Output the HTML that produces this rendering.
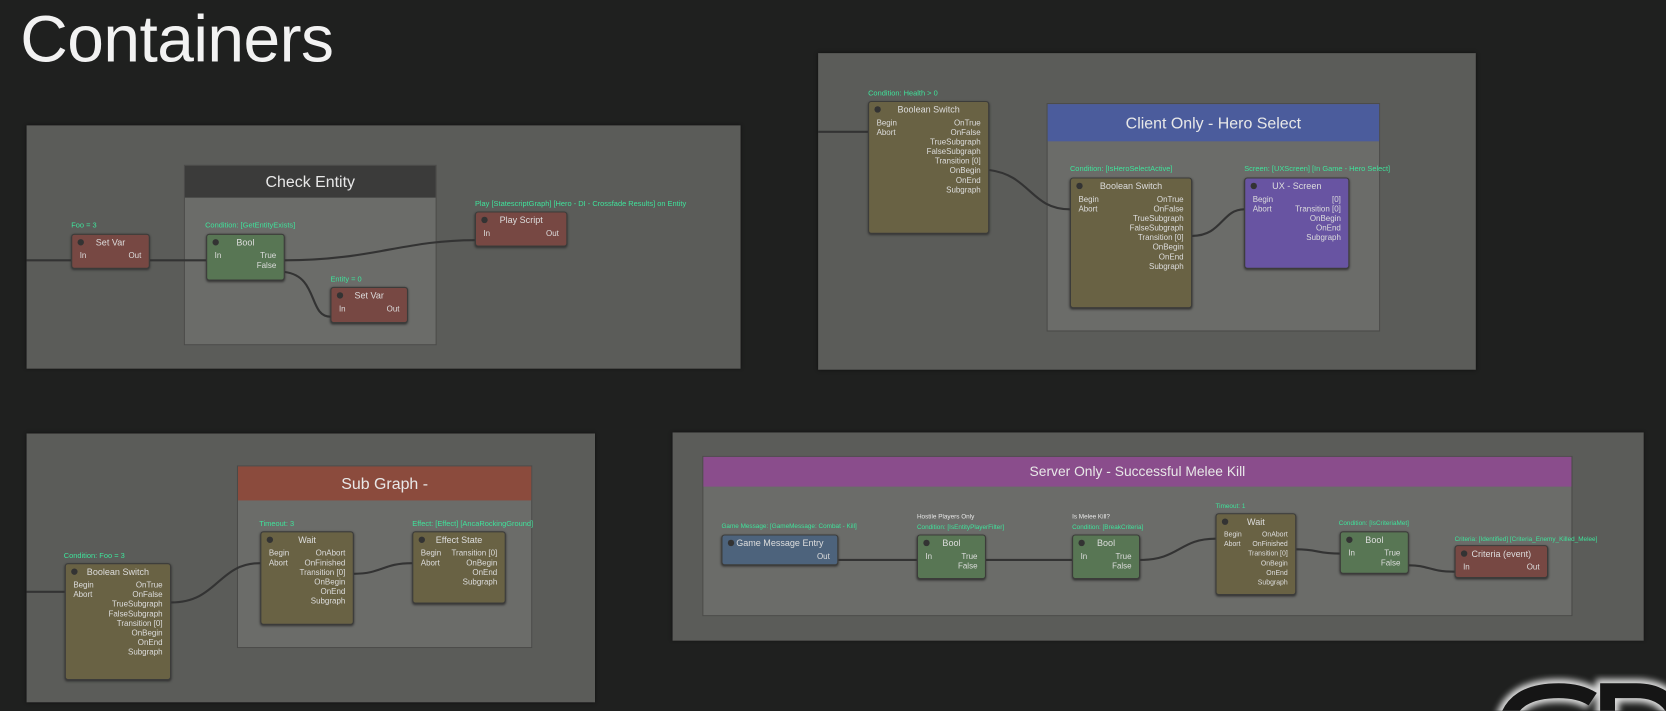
<!DOCTYPE html>
<html><head><meta charset="utf-8"><style>
html,body{margin:0;padding:0;background:#1f201f;width:1666px;height:711px;overflow:hidden}
#w{position:absolute;left:0;top:0;width:1568px;height:669px;overflow:hidden;transform:scale(1.0625);transform-origin:0 0;font-family:"Liberation Sans",sans-serif}
.p{position:absolute;background:#5b5c59;box-shadow:0 0 3px #111}
.c{position:absolute;background:#6b6c69;border:1px solid #4a4a48}
.ch{position:absolute;left:0;right:0;top:0;color:#e8e8e8;text-align:center;font-size:15px}
.n{position:absolute;border-radius:3px;border:1px solid #3c3c3a;font-size:7.5px;color:#ddd;box-sizing:border-box;box-shadow:0 1px 2px #333}
.n .t{height:15px;line-height:15px;text-align:center;font-size:8.5px;position:relative}
.n .t:before{content:"";position:absolute;left:5px;top:4px;width:6px;height:6px;border-radius:50%;background:#333}
.r{display:flex;justify-content:space-between;padding:0 7px;height:9px;line-height:9px;position:relative}
.r i{font-style:normal}
.lb{position:absolute;color:#3fe39b;font-size:7px;white-space:nowrap}
.lw{position:absolute;color:#e8e8e8;font-size:7px;white-space:nowrap}
.red{background:#774843}.grn{background:#587654}.olv{background:#696244}.blu{background:#4d637c}.pur{background:#6854a2}
svg{position:absolute;left:0;top:0}
</style></head><body><div id="w">
<div style="position:absolute;left:19px;top:2px;color:#f2f2f2;font-size:62px;letter-spacing:-0.5px;line-height:72px">Containers</div>

<div class="p" style="left:25px;top:118px;width:672px;height:229px"></div>
<div class="c" style="left:173px;top:155px;width:236px;height:168px"><div class="ch" style="background:#3b3b3a;height:30px;line-height:32px">Check Entity</div></div>
<div class="p" style="left:770px;top:50px;width:619px;height:298px"></div>
<div class="c" style="left:985px;top:97px;width:312px;height:213px"><div class="ch" style="background:#4b5c9c;height:35px;line-height:37px">Client Only - Hero Select</div></div>
<div class="p" style="left:25px;top:408px;width:535px;height:253px"></div>
<div class="c" style="left:223px;top:438px;width:276px;height:170px"><div class="ch" style="background:#8b4b3d;height:32px;line-height:34px">Sub Graph -</div></div>
<div class="p" style="left:633px;top:407px;width:914px;height:196px"></div>
<div class="c" style="left:661px;top:429px;width:817px;height:149px"><div class="ch" style="background:#8a4d8c;height:28px;line-height:28px;font-size:13px">Server Only - Successful Melee Kill</div></div>

<svg width="1568" height="669" fill="none" stroke="#333" stroke-width="2">
<path d="M25 245 H67 M141 245 H194 M268 245 C350 245 380 226 447 226 M268 256 C300 260 290 298 311 298"/>
<path d="M770 124 H817 M931 160 C970 165 970 197 1007 197 M1122 222 C1150 222 1150 197 1171 197"/>
<path d="M25 557 H61 M161 567 C205 567 205 530 245 530 M333 540 C360 540 360 530 388 530"/>
<path d="M789 527 H863 M928 527 H1009 M1073 527 C1110 527 1110 507 1144 507 M1220 517 C1240 517 1240 521 1261 521 M1326 532 C1345 532 1345 538 1369 538"/>
</svg>

<div class="lb" style="left:67px;top:209px">Foo = 3</div>
<div class="n red" style="left:67px;top:220px;width:74px;height:33px"><div class="t">Set Var</div><div class="r"><i>In</i><i>Out</i></div></div>
<div class="lb" style="left:193px;top:209px">Condition: [GetEntityExists]</div>
<div class="n grn" style="left:194px;top:220px;width:74px;height:44px"><div class="t">Bool</div><div class="r"><i>In</i><i>True</i></div><div class="r"><i></i><i>False</i></div></div>
<div class="lb" style="left:311px;top:260px">Entity = 0</div>
<div class="n red" style="left:311px;top:270px;width:73px;height:34px"><div class="t">Set Var</div><div class="r"><i>In</i><i>Out</i></div></div>
<div class="lb" style="left:447px;top:189px">Play [StatescriptGraph] [Hero - DI - Crossfade Results] on Entity</div>
<div class="n red" style="left:447px;top:199px;width:87px;height:33px"><div class="t">Play Script</div><div class="r"><i>In</i><i>Out</i></div></div>

<div class="lb" style="left:817px;top:85px">Condition: Health &gt; 0</div>
<div class="n olv" style="left:817px;top:95px;width:114px;height:125px"><div class="t">Boolean Switch</div><div class="r"><i>Begin</i><i>OnTrue</i></div><div class="r"><i>Abort</i><i>OnFalse</i></div><div class="r"><i></i><i>TrueSubgraph</i></div><div class="r"><i></i><i>FalseSubgraph</i></div><div class="r"><i></i><i>Transition [0]</i></div><div class="r"><i></i><i>OnBegin</i></div><div class="r"><i></i><i>OnEnd</i></div><div class="r"><i></i><i>Subgraph</i></div></div>
<div class="lb" style="left:1007px;top:156px">Condition: [IsHeroSelectActive]</div>
<div class="n olv" style="left:1007px;top:167px;width:115px;height:123px"><div class="t">Boolean Switch</div><div class="r"><i>Begin</i><i>OnTrue</i></div><div class="r"><i>Abort</i><i>OnFalse</i></div><div class="r"><i></i><i>TrueSubgraph</i></div><div class="r"><i></i><i>FalseSubgraph</i></div><div class="r"><i></i><i>Transition [0]</i></div><div class="r"><i></i><i>OnBegin</i></div><div class="r"><i></i><i>OnEnd</i></div><div class="r"><i></i><i>Subgraph</i></div></div>
<div class="lb" style="left:1171px;top:156px">Screen: [UXScreen] [In Game - Hero Select]</div>
<div class="n pur" style="left:1171px;top:167px;width:99px;height:86px"><div class="t">UX - Screen</div><div class="r"><i>Begin</i><i>[0]</i></div><div class="r"><i>Abort</i><i>Transition [0]</i></div><div class="r"><i></i><i>OnBegin</i></div><div class="r"><i></i><i>OnEnd</i></div><div class="r"><i></i><i>Subgraph</i></div></div>

<div class="lb" style="left:60px;top:520px">Condition: Foo = 3</div>
<div class="n olv" style="left:61px;top:530px;width:100px;height:110px"><div class="t">Boolean Switch</div><div class="r"><i>Begin</i><i>OnTrue</i></div><div class="r"><i>Abort</i><i>OnFalse</i></div><div class="r"><i></i><i>TrueSubgraph</i></div><div class="r"><i></i><i>FalseSubgraph</i></div><div class="r"><i></i><i>Transition [0]</i></div><div class="r"><i></i><i>OnBegin</i></div><div class="r"><i></i><i>OnEnd</i></div><div class="r"><i></i><i>Subgraph</i></div></div>
<div class="lb" style="left:244px;top:490px">Timeout: 3</div>
<div class="n olv" style="left:245px;top:500px;width:88px;height:88px"><div class="t">Wait</div><div class="r"><i>Begin</i><i>OnAbort</i></div><div class="r"><i>Abort</i><i>OnFinished</i></div><div class="r"><i></i><i>Transition [0]</i></div><div class="r"><i></i><i>OnBegin</i></div><div class="r"><i></i><i>OnEnd</i></div><div class="r"><i></i><i>Subgraph</i></div></div>
<div class="lb" style="left:388px;top:490px">Effect: [Effect] [AncaRockingGround]</div>
<div class="n olv" style="left:388px;top:500px;width:88px;height:68px"><div class="t">Effect State</div><div class="r"><i>Begin</i><i>Transition [0]</i></div><div class="r"><i>Abort</i><i>OnBegin</i></div><div class="r"><i></i><i>OnEnd</i></div><div class="r"><i></i><i>Subgraph</i></div></div>

<div class="lb" style="left:679px;top:493px;font-size:6px">Game Message: [GameMessage: Combat - Kill]</div>
<div class="n blu" style="left:679px;top:503px;width:110px;height:29px"><div class="t">Game Message Entry</div><div class="r"><i></i><i>Out</i></div></div>
<div class="lw" style="left:863px;top:484px;font-size:6px">Hostile Players Only</div>
<div class="lb" style="left:863px;top:494px;font-size:6px">Condition: [IsEntityPlayerFilter]</div>
<div class="n grn" style="left:863px;top:503px;width:65px;height:42px"><div class="t">Bool</div><div class="r"><i>In</i><i>True</i></div><div class="r"><i></i><i>False</i></div></div>
<div class="lw" style="left:1009px;top:484px;font-size:6px">Is Melee Kill?</div>
<div class="lb" style="left:1009px;top:494px;font-size:6px">Condition: [BreakCriteria]</div>
<div class="n grn" style="left:1009px;top:503px;width:64px;height:42px"><div class="t">Bool</div><div class="r"><i>In</i><i>True</i></div><div class="r"><i></i><i>False</i></div></div>
<div class="lb" style="left:1144px;top:474px;font-size:6px">Timeout: 1</div>
<div class="n olv" style="left:1144px;top:483px;width:76px;height:77px;font-size:6.5px"><div class="t">Wait</div><div class="r"><i>Begin</i><i>OnAbort</i></div><div class="r"><i>Abort</i><i>OnFinished</i></div><div class="r"><i></i><i>Transition [0]</i></div><div class="r"><i></i><i>OnBegin</i></div><div class="r"><i></i><i>OnEnd</i></div><div class="r"><i></i><i>Subgraph</i></div></div>
<div class="lb" style="left:1260px;top:490px;font-size:6px">Condition: [IsCriteriaMet]</div>
<div class="n grn" style="left:1261px;top:500px;width:65px;height:40px"><div class="t">Bool</div><div class="r"><i>In</i><i>True</i></div><div class="r"><i></i><i>False</i></div></div>
<div class="lb" style="left:1369px;top:505px;font-size:6px">Criteria: [Identified] [Criteria_Enemy_Killed_Melee]</div>
<div class="n red" style="left:1369px;top:513px;width:88px;height:31px"><div class="t">Criteria (event)</div><div class="r"><i>In</i><i>Out</i></div></div>

<svg style="left:1395px;top:620px" width="173" height="49" viewBox="0 0 173 49" fill="none">
<defs><filter id="g" x="-20%" y="-50%" width="140%" height="200%"><feGaussianBlur stdDeviation="3"/></filter></defs>
<g filter="url(#g)" stroke="#fff" stroke-width="22" opacity="0.85">
<path d="M22 62 Q28 30 72 30 Q92 30 104 38"/>
<path d="M118 62 V30 H145 Q170 30 180 48"/>
</g>
<g stroke="#151515" stroke-width="14">
<path d="M22 62 Q28 30 72 30 Q92 30 104 38"/>
<path d="M118 62 V30 H145 Q170 30 180 48"/>
</g>
</svg>
</div></body></html>
